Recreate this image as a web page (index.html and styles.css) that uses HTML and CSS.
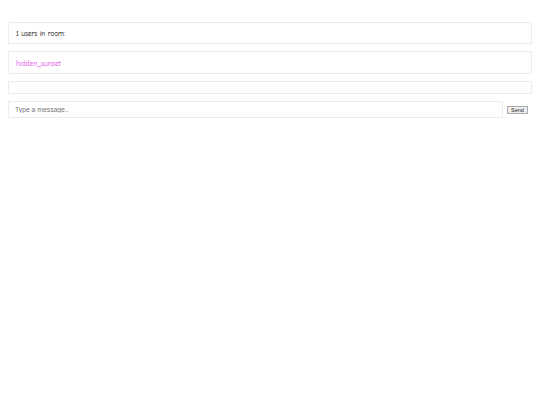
FILE: index.html
```html
<!DOCTYPE html>
<html>
<head>
<meta charset="utf-8">
<link rel="stylesheet" href="styles.css">
</head>
<body>
<div class="chat">
  <div class="panel count">1 users in room:</div>
  <div class="panel users"><span class="user">hidden_sunset</span></div>
  <div class="panel messages"></div>
  <form class="composer">
    <input class="msg" type="text" placeholder="Type a message..">
    <button class="send" type="button">Send</button>
  </form>
</div>
</body>
</html>
```
FILE: styles.css
```css
html, body {
  margin: 0;
  padding: 0;
  background: #ffffff;
}
body {
  font-family: "Comic Sans MS", "Comic Neue", "DejaVu Sans", sans-serif;
  font-size: 7.2px;
  color: #000;
}
.chat {
  padding: 22px 8px 0 8px;
  display: flex;
  flex-direction: column;
  gap: 7px;
}
.panel {
  box-sizing: border-box;
  border: 1px solid #ececec;
  padding: 1px 7px 0 7px;
  display: flex;
  align-items: center;
}
.count { height: 22px; }
.users { height: 23px; padding-top: 2px; }
.user { color: #e040e8; font-size: 7.4px; }
.messages { height: 13px; }
.composer {
  margin: 0;
  display: flex;
  align-items: center;
  gap: 4px;
}
.msg {
  flex: 1;
  box-sizing: border-box;
  height: 17px;
  border: 1px solid #ececec;
  padding: 0 6px;
  font-family: "Liberation Sans", Arial, sans-serif;
  font-size: 6.8px;
  outline: none;
  margin: 0;
}
.msg::placeholder { color: #777; }
.send {
  box-sizing: border-box;
  width: 21px;
  height: 8px;
  margin: 0 4px 0 0;
  padding: 0;
  border: 1px solid #aaa;
  background: #efefef;
  font-family: "Liberation Sans", Arial, sans-serif;
  font-size: 5.5px;
  line-height: 6px;
  color: #222;
}
```
